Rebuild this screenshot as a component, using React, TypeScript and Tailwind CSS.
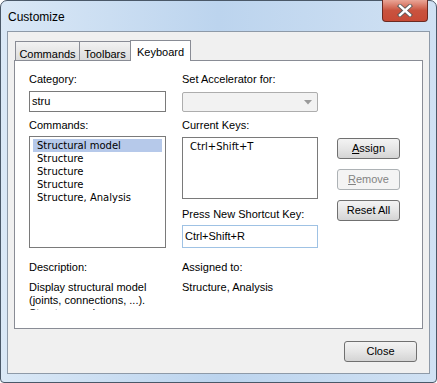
const ui = { fontFamily: '"Liberation Sans", Arial, sans-serif' };
const list = { fontFamily: '"DejaVu Sans", Verdana, sans-serif' };

function Label({ children, className = "" }: { children: React.ReactNode; className?: string }) {
  return <div className={`h-[13px] text-[11px] leading-[13px] text-black ${className}`}>{children}</div>;
}

function Button({
  children,
  disabled,
  className = "",
}: {
  children: React.ReactNode;
  disabled?: boolean;
  className?: string;
}) {
  return (
    <div
      className={
        "flex h-[21px] items-center justify-center rounded-[3px] border text-[11px] " +
        (disabled
          ? "border-[#adb2b5] bg-[#f4f4f4] text-[#838383] "
          : "border-[#707070] bg-gradient-to-b from-[#f3f3f3] via-[#e6e6e6] to-[#d4d4d4] text-black ") +
        className
      }
    >
      {children}
    </div>
  );
}

function Tab({ label, active, className = "" }: { label: string; active?: boolean; className?: string }) {
  if (active) {
    return (
      <div
        className={`relative z-10 -mb-px flex h-[21px] items-start justify-center border border-b-0 border-[#898c95] bg-white pt-[3px] text-[11px] ${className}`}
      >
        {label}
      </div>
    );
  }
  return (
    <div
      className={`flex h-[19px] items-start justify-center border border-b-0 border-[#898c95] bg-gradient-to-b from-[#f2f2f2] to-[#dcdcdc] pt-[4px] text-[11px] ${className}`}
    >
      {label}
    </div>
  );
}

export default function App() {
  return (
    <div className="h-[383px] w-[437px] bg-white" style={ui}>
      <div className="flex h-[383px] w-[437px] flex-col rounded-t-[7px] rounded-b-[4px] border border-[#4a5868] bg-gradient-to-r from-[#dae8f6] via-[#bcd4ee] to-[#d0e1f3] px-[6px] pb-[8px]">
        {/* title bar */}
        <div className="flex h-[30px] items-start justify-between">
          <div className="pl-[1px] pt-[9px] text-[12px] leading-[14px] text-black">Customize</div>
          <div className="-mt-px mr-[2px] flex h-[22px] w-[46px] items-center justify-center rounded-b-[4px] border border-t-0 border-[#6b2a22] bg-gradient-to-b from-[#e9a597] via-[#c9533f] to-[#c74a36]">
            <svg width="16" height="13" viewBox="0 0 16 13">
              <path
                d="M3 2 L13 11 M13 2 L3 11"
                stroke="#5a5a5a"
                strokeWidth="4.2"
                strokeLinecap="square"
              />
              <path
                d="M3 2 L13 11 M13 2 L3 11"
                stroke="#ffffff"
                strokeWidth="2.4"
                strokeLinecap="square"
              />
            </svg>
          </div>
        </div>

        {/* client area */}
        <div className="flex flex-1 flex-col border border-[#8e9aa8] bg-[#f0f0f0] px-[6px] pt-[8px]">
          <div className="flex items-end pl-[1px]">
            <Tab label="Commands" className="w-[65px]" />
            <Tab label="Toolbars" className="-ml-px w-[52px]" />
            <Tab label="Keyboard" active className="-ml-px w-[61px]" />
          </div>

          <div className="flex h-[269px] border border-[#898c95] bg-white pl-[14px]">
            {/* left column */}
            <div className="flex w-[137px] flex-col pt-[12px]">
              <Label>Category:</Label>
              <div className="mt-[5px] flex h-[21px] items-center border border-[#7a7a7a] bg-white pl-[2px] text-[11px]">
                stru
              </div>
              <Label className="mt-[7px]">Commands:</Label>
              <div className="mt-[4px] flex h-[112px] flex-col border border-[#7a7a7a] bg-white px-[3px] pt-[2px] text-[10px] leading-[13px]" style={list}>
                <div className="h-[13px] bg-[#b6c9ea] pl-[4px]">Structural model</div>
                <div className="h-[13px] pl-[4px]">Structure</div>
                <div className="h-[13px] pl-[4px]">Structure</div>
                <div className="h-[13px] pl-[4px]">Structure</div>
                <div className="h-[13px] pl-[4px]">Structure, Analysis</div>
              </div>
              <Label className="mt-[13px]">Description:</Label>
              <div className="mt-[7px] h-[29px] overflow-hidden text-[11px] leading-[13px]">
                Display structural model
                <br />
                (joints, connections, ...).
                <br />
                Structure and
              </div>
            </div>

            {/* right column */}
            <div className="ml-[16px] flex w-[136px] flex-col pt-[12px]">
              <Label>Set Accelerator for:</Label>
              <div className="mt-[6px] flex h-[20px] items-center justify-end rounded-[2px] border border-[#adadad] bg-[#f2f2f2] pr-[5px]">
                <svg width="8" height="5" viewBox="0 0 8 5">
                  <path d="M0 0 H8 L4 4.5 Z" fill="#9a9a9a" />
                </svg>
              </div>
              <Label className="mt-[7px]">Current Keys:</Label>
              <div className="mt-[5px] h-[62px] border border-[#7a7a7a] bg-white pl-[7px] pt-[2px] text-[10px] leading-[13px]" style={list}>
                Ctrl+Shift+T
              </div>
              <Label className="mt-[9px]">Press New Shortcut Key:</Label>
              <div className="mt-[4px] flex h-[23px] items-center border border-[#9fc2e4] bg-white pl-[2px] text-[11px]">
                Ctrl+Shift+R
              </div>
              <Label className="mt-[13px]">Assigned to:</Label>
              <div className="mt-[7px] text-[11px] leading-[13px]">Structure, Analysis</div>
            </div>

            {/* buttons column */}
            <div className="ml-[19px] flex w-[63px] flex-col gap-[10px] pt-[77px]">
              <Button>
                <span className="underline">A</span>ssign
              </Button>
              <Button disabled>
                <span className="underline">R</span>emove
              </Button>
              <Button>Reset All</Button>
            </div>
          </div>

          <div className="flex justify-end pr-[6px] pt-[12px]">
            <Button className="w-[73px]">Close</Button>
          </div>
        </div>
      </div>
    </div>
  );
}
